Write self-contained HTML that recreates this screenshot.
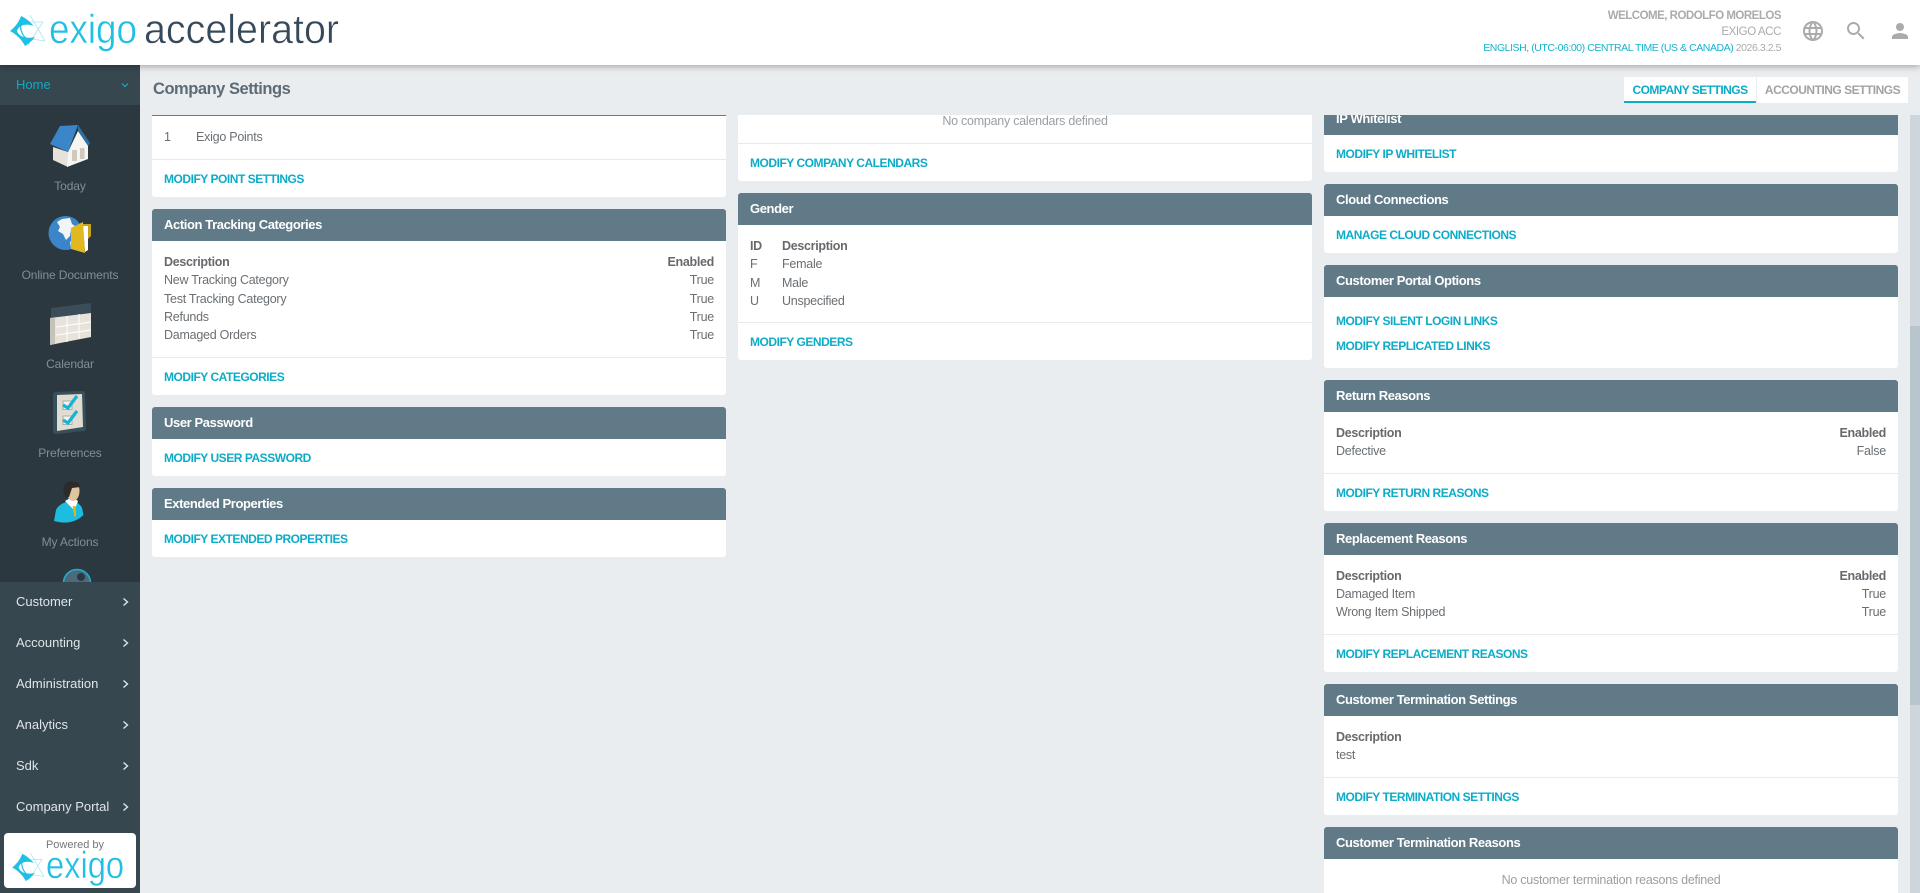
<!DOCTYPE html>
<html lang="en"><head><meta charset="utf-8"><title>Company Settings</title>
<style>
*{box-sizing:border-box}
html,body{margin:0;padding:0;width:1920px;height:893px;overflow:hidden;background:#eaedf0;font-family:"Liberation Sans",sans-serif}
a{text-decoration:none;color:inherit}
#hdr{position:absolute;left:0;top:0;width:1920px;height:65px;background:#fff;box-shadow:0 2px 6px rgba(0,0,0,.28);z-index:5}
.hr{position:absolute;right:139px;text-align:right;white-space:nowrap;line-height:16px;color:#ababab}
#side{position:absolute;left:0;top:65px;width:140px;height:828px;background:#2c3840;overflow:hidden;z-index:4}
#home{position:absolute;left:0;top:0;width:140px;height:40px;background:#37474f;color:#12a9c4;font-size:13px;line-height:40px;padding-left:16px}
.lbl{position:absolute;left:0;width:140px;text-align:center;font-size:12px;line-height:16px;color:#858d92;letter-spacing:-.12px}
#nav{position:absolute;left:0;top:517px;width:140px;height:311px;background:#37474f}
.ni{position:absolute;left:16px;font-size:13px;line-height:18px;color:#dfe5e8}
.ch{position:absolute;left:120px}
#pw{position:absolute;left:4px;top:251px;width:132px;height:55px;background:#fff;border-radius:4px}
#ttl{position:absolute;left:153px;top:79px;font-size:16.5px;line-height:20px;font-weight:bold;color:#5c6b75;letter-spacing:-.47px}
.tab{position:absolute;top:77px;height:26px;background:#fff;font-size:12px;font-weight:bold;line-height:26px;text-align:center;white-space:nowrap}
#clip{position:absolute;left:0;top:115px;width:1920px;height:778px;overflow:hidden}
#in{position:absolute;left:0;top:-115px;width:1920px;height:893px}
.col{position:absolute;top:0;width:574px;height:893px}
.p{position:absolute;left:0;width:574px;background:#fff;border-radius:3px}
.h{position:absolute;left:0;top:0;width:574px;height:32px;background:#607a88;border-radius:3px 3px 0 0}
.h b{position:absolute;left:12px;top:7px;font-size:13px;line-height:18px;color:#fff;letter-spacing:-.4px;white-space:nowrap}
.d{position:absolute;left:0;width:574px;height:1px;background:#e8ebed}
.t{position:absolute;left:12px;font-size:12.5px;line-height:18px;margin-top:-9px;color:#6a6f73;letter-spacing:-.25px;white-space:nowrap}
.t.c2{left:44px}
.t.r{left:auto;right:12px}
.t.b{font-weight:bold;color:#66696d;letter-spacing:-.3px}
.l{position:absolute;left:12px;font-size:12px;font-weight:bold;line-height:18px;margin-top:-9px;color:#0cacc8;letter-spacing:-.47px;white-space:nowrap}
.m{position:absolute;left:0;width:574px;text-align:center;font-size:12.5px;line-height:18px;margin-top:-9px;color:#9b9fa2;letter-spacing:-.25px}
#sb{position:absolute;left:1910px;top:115px;width:10px;height:778px;background:#ced6dc}
#th{position:absolute;left:0;top:211px;width:10px;height:379px;background:#b9c5cd}
svg{display:block}
</style></head><body>

<svg width="0" height="0" style="position:absolute">
<symbol id="star" viewBox="0 0 36 32">
<g fill="none" stroke="#a9e6f3" stroke-width=".8"><path d="M20 0L35 26M33 7L18 30M13 7H33M15 23L35 26"/></g>
<path fill="#1fc0e4" d="M0 16C5 12 9 7 11 1C16 3 20 7 24 11C16 8 9 10 7 16C9 22 17 24 25 22C22 26 18 29 15 31C12 25 6 19 0 16Z"/>
<path fill="none" stroke="#1fc0e4" stroke-width="1.3" d="M12 6C9 12 11 20 18 25"/>
</symbol>
</svg>

<div id="hdr">
<svg style="position:absolute;left:10px;top:15px" width="36" height="32"><use href="#star"/></svg>
<svg style="position:absolute;left:0;top:0" width="345" height="65">
<text x="49" y="43" font-family="Liberation Sans" font-size="41" fill="#1fc0e4" stroke="#fff" stroke-width=".5" textLength="88" lengthAdjust="spacingAndGlyphs">exigo</text>
<text x="144" y="43" font-family="Liberation Sans" font-size="41" fill="#36495a" stroke="#fff" stroke-width=".5" textLength="195" lengthAdjust="spacingAndGlyphs">accelerator</text>
</svg>
<div class="hr" style="top:8px;font-size:11.5px;font-weight:bold;letter-spacing:-.5px">WELCOME, RODOLFO MORELOS</div>
<div class="hr" style="top:24px;font-size:11.5px;letter-spacing:-.4px">EXIGO ACC</div>
<div class="hr" style="top:40px;font-size:10.5px;letter-spacing:-.44px"><span style="color:#16b3cf">ENGLISH, (UTC-06:00) CENTRAL TIME (US &amp; CANADA)</span> 2026.3.2.5</div>
<svg style="position:absolute;left:1801px;top:19px" width="24" height="24" fill="#ababab"><path d="M11.99 2C6.47 2 2 6.48 2 12s4.47 10 9.99 10C17.52 22 22 17.52 22 12S17.52 2 11.99 2zm6.93 6h-2.95c-.32-1.25-.78-2.45-1.38-3.56 1.84.63 3.37 1.91 4.33 3.56zM12 4.04c.83 1.2 1.48 2.53 1.91 3.96h-3.82c.43-1.43 1.08-2.76 1.91-3.96zM4.26 14C4.1 13.36 4 12.69 4 12s.1-1.36.26-2h3.38c-.08.66-.14 1.32-.14 2 0 .68.06 1.34.14 2H4.26zm.82 2h2.95c.32 1.25.78 2.45 1.38 3.56-1.84-.63-3.37-1.9-4.33-3.56zm2.95-8H5.08c.96-1.66 2.49-2.93 4.33-3.56C8.81 5.55 8.35 6.75 8.03 8zM12 19.96c-.83-1.2-1.48-2.53-1.91-3.96h3.82c-.43 1.43-1.08 2.76-1.91 3.96zM14.34 14H9.66c-.09-.66-.16-1.32-.16-2 0-.68.07-1.35.16-2h4.68c.09.65.16 1.32.16 2 0 .68-.07 1.34-.16 2zm.25 5.56c.6-1.11 1.06-2.31 1.38-3.56h2.95c-.96 1.65-2.49 2.93-4.33 3.56zM16.36 14c.08-.66.14-1.32.14-2 0-.68-.06-1.34-.14-2h3.38c.16.64.26 1.31.26 2s-.1 1.36-.26 2h-3.38z"/></svg>
<svg style="position:absolute;left:1844px;top:19px" width="24" height="24" fill="#ababab"><path d="M15.5 14h-.79l-.28-.27C15.41 12.59 16 11.11 16 9.5 16 5.91 13.09 3 9.5 3S3 5.91 3 9.5 5.91 16 9.5 16c1.61 0 3.09-.59 4.23-1.57l.27.28v.79l5 4.99L20.49 19l-4.99-5zm-6 0C7.01 14 5 11.99 5 9.5S7.01 5 9.5 5 14 7.01 14 9.5 11.99 14 9.5 14z"/></svg>
<svg style="position:absolute;left:1888px;top:19px" width="24" height="24" fill="#ababab"><path d="M12 12c2.21 0 4-1.79 4-4s-1.79-4-4-4-4 1.79-4 4 1.79 4 4 4zm0 2c-2.67 0-8 1.34-8 4v2h16v-2c0-2.66-5.33-4-8-4z"/></svg>
</div>

<div id="side">
<div id="home">Home</div>
<svg class="ch" style="left:119px;top:17px" width="12" height="8"><path d="M3 1.5L6 4.5L9 1.5" fill="none" stroke="#12a9c4" stroke-width="1.2"/></svg>

<svg style="position:absolute;left:0;top:-65px" width="140" height="600">
<!-- house -->
<path fill="#e6e2da" d="M53 147L68 152V167L53 160Z"/>
<path fill="#f5f5f4" d="M68 152L78 131L88 145V159L67 167Z"/>
<path fill="#cfcabd" d="M72 150h5v11h-5zM80 148h4.500v11h-4.500z"/>
<path fill="#3a86c8" d="M60 126L78 125L68 152L50 144Z"/>
<path fill="#2f6f9f" d="M78 125L90 143L88 146L78 131Z"/>
<!-- globe + folder -->
<circle cx="65.500" cy="233" r="17" fill="#3a86c8"/>
<path fill="#f2f5f7" d="M57 222L62 219L70 218L72 224L75 226L71 230L70 236L66 240L63 234L58 231L60 227ZM70 242L72 240L75 247L71 248Z"/>
<path fill="#c8a21f" d="M83 224H91V236L87 240H83Z"/>
<path fill="#fff" d="M83 226H88V250L85 252Z"/>
<path fill="#e2b820" d="M71 228L83 222L85 253L71 249Z"/>
<!-- calendar -->
<path fill="#3a4d58" d="M51 308L91 303V314L51 319Z"/>
<path fill="#e7e3da" d="M50 318L91 313V337L50 345Z"/>
<path fill="#c5c2b9" d="M50 318H55V344L50 345Z"/>
<path fill="none" stroke="#fff" stroke-width="1" d="M56 327L91 322M56 335L91 330M67 316V342M79 314V339"/>
<!-- preferences -->
<path fill="#39505c" d="M56 392L82 391Q85 391 85 394L86 429Q86 431 83 431L57 434Q53 434 53 431L53 395Q53 392 56 392Z"/>
<path fill="#e0dcd2" d="M57 395L82 394L83 427L57 431Z"/>
<path fill="#f4f2ec" stroke="#9b9c98" stroke-width=".8" d="M63 401h9v8.500h-9zM63 416h9v8.500h-9z"/>
<path fill="none" stroke="#18b3d3" stroke-width="3.200" d="M63 405L68 408L77 396M63 420L68 423L77 411"/>
<!-- person -->
<path fill="#1cbde0" d="M56 510Q58 505 66 502L76 502Q81 505 82 508L83.500 515Q72 526 54 521Z"/>
<path fill="#fff" d="M65 501L72 497L78 501L75 509L73 509Z"/>
<path fill="#e0b820" d="M72.500 506H75.500L76 516L74.500 517Z"/>
<ellipse cx="73" cy="491" rx="6.500" ry="10" fill="#e0c49c"/>
<path fill="#2b2b2b" d="M64 494C62 485 66 481 72 481C77 481 80 484 80.500 487L72 488L69 497L66 498Z"/>
<!-- partial globe -->
<circle cx="77" cy="583" r="13.500" fill="#4d6a7a" stroke="#1fb0d0" stroke-width="1.500"/>
<circle cx="81" cy="577" r="4" fill="#2c3840"/>
</svg>

<div class="lbl" style="top:113px">Today</div>
<div class="lbl" style="top:202px">Online Documents</div>
<div class="lbl" style="top:291px">Calendar</div>
<div class="lbl" style="top:380px">Preferences</div>
<div class="lbl" style="top:469px">My Actions</div>

<div id="nav">
<div class="ni" style="top:11px">Customer</div>
<div class="ni" style="top:52px">Accounting</div>
<div class="ni" style="top:93px">Administration</div>
<div class="ni" style="top:134px">Analytics</div>
<div class="ni" style="top:175px">Sdk</div>
<div class="ni" style="top:216px">Company Portal</div>
<svg class="ch" style="top:14px" width="12" height="12"><path d="M3.500 2.500L7.500 6L3.500 9.500" fill="none" stroke="#dfe5e8" stroke-width="1.400"/></svg>
<svg class="ch" style="top:55px" width="12" height="12"><path d="M3.500 2.500L7.500 6L3.500 9.500" fill="none" stroke="#dfe5e8" stroke-width="1.400"/></svg>
<svg class="ch" style="top:96px" width="12" height="12"><path d="M3.500 2.500L7.500 6L3.500 9.500" fill="none" stroke="#dfe5e8" stroke-width="1.400"/></svg>
<svg class="ch" style="top:137px" width="12" height="12"><path d="M3.500 2.500L7.500 6L3.500 9.500" fill="none" stroke="#dfe5e8" stroke-width="1.400"/></svg>
<svg class="ch" style="top:178px" width="12" height="12"><path d="M3.500 2.500L7.500 6L3.500 9.500" fill="none" stroke="#dfe5e8" stroke-width="1.400"/></svg>
<svg class="ch" style="top:219px" width="12" height="12"><path d="M3.500 2.500L7.500 6L3.500 9.500" fill="none" stroke="#dfe5e8" stroke-width="1.400"/></svg>
<div id="pw">
<div style="position:absolute;left:1px;width:140px;top:5px;text-align:center;font-size:11px;line-height:14px;color:#777">Powered by</div>
<svg style="position:absolute;left:8px;top:20px" width="33" height="29"><use href="#star"/></svg>
<svg style="position:absolute;left:0;top:0" width="132" height="55">
<text x="42" y="45" font-family="Liberation Sans" font-size="38" fill="#1fc0e4" stroke="#fff" stroke-width=".4" textLength="78" lengthAdjust="spacingAndGlyphs">exigo</text>
</svg>
</div>
</div>
</div>

<div id="ttl">Company Settings</div>
<div class="tab" style="left:1624px;width:132px;color:#0cacc8;border-bottom:2px solid #0cacc8;letter-spacing:-.53px">COMPANY SETTINGS</div>
<div class="tab" style="left:1757px;width:151px;color:#a0a3a6;letter-spacing:-.5px">ACCOUNTING SETTINGS</div>

<div id="clip"><div id="in">

<div class="col" style="left:152px">
 <div class="p" style="top:84px;height:113px">
  <div class="h"></div>
  <div class="t" style="top:53px">1</div><div class="t c2" style="top:53px">Exigo Points</div>
  <div class="d" style="top:75px"></div>
  <a class="l" style="top:95px">MODIFY POINT SETTINGS</a>
 </div>
 <div class="p" style="top:209px;height:186px">
  <div class="h"><b>Action Tracking Categories</b></div>
  <div class="t b" style="top:53px">Description</div><div class="t b r" style="top:53px">Enabled</div>
  <div class="t" style="top:71px">New Tracking Category</div><div class="t r" style="top:71px">True</div>
  <div class="t" style="top:90px">Test Tracking Category</div><div class="t r" style="top:90px">True</div>
  <div class="t" style="top:108px">Refunds</div><div class="t r" style="top:108px">True</div>
  <div class="t" style="top:126px">Damaged Orders</div><div class="t r" style="top:126px">True</div>
  <div class="d" style="top:148px"></div>
  <a class="l" style="top:168px">MODIFY CATEGORIES</a>
 </div>
 <div class="p" style="top:407px;height:69px">
  <div class="h"><b>User Password</b></div>
  <a class="l" style="top:51px">MODIFY USER PASSWORD</a>
 </div>
 <div class="p" style="top:488px;height:69px">
  <div class="h"><b>Extended Properties</b></div>
  <a class="l" style="top:51px">MODIFY EXTENDED PROPERTIES</a>
 </div>
</div>

<div class="col" style="left:738px">
 <div class="p" style="top:100px;height:81px">
  <div class="m" style="top:21px">No company calendars defined</div>
  <div class="d" style="top:43px"></div>
  <a class="l" style="top:63px">MODIFY COMPANY CALENDARS</a>
 </div>
 <div class="p" style="top:193px;height:167px">
  <div class="h"><b>Gender</b></div>
  <div class="t b" style="top:53px">ID</div><div class="t b c2" style="top:53px">Description</div>
  <div class="t" style="top:71px">F</div><div class="t c2" style="top:71px">Female</div>
  <div class="t" style="top:90px">M</div><div class="t c2" style="top:90px">Male</div>
  <div class="t" style="top:108px">U</div><div class="t c2" style="top:108px">Unspecified</div>
  <div class="d" style="top:129px"></div>
  <a class="l" style="top:149px">MODIFY GENDERS</a>
 </div>
</div>

<div class="col" style="left:1324px">
 <div class="p" style="top:103px;height:69px">
  <div class="h"><b>IP Whitelist</b></div>
  <a class="l" style="top:51px">MODIFY IP WHITELIST</a>
 </div>
 <div class="p" style="top:184px;height:69px">
  <div class="h"><b>Cloud Connections</b></div>
  <a class="l" style="top:51px">MANAGE CLOUD CONNECTIONS</a>
 </div>
 <div class="p" style="top:265px;height:103px">
  <div class="h"><b>Customer Portal Options</b></div>
  <a class="l" style="top:56px">MODIFY SILENT LOGIN LINKS</a>
  <a class="l" style="top:81px">MODIFY REPLICATED LINKS</a>
 </div>
 <div class="p" style="top:380px;height:131px">
  <div class="h"><b>Return Reasons</b></div>
  <div class="t b" style="top:53px">Description</div><div class="t b r" style="top:53px">Enabled</div>
  <div class="t" style="top:71px">Defective</div><div class="t r" style="top:71px">False</div>
  <div class="d" style="top:93px"></div>
  <a class="l" style="top:113px">MODIFY RETURN REASONS</a>
 </div>
 <div class="p" style="top:523px;height:149px">
  <div class="h"><b>Replacement Reasons</b></div>
  <div class="t b" style="top:53px">Description</div><div class="t b r" style="top:53px">Enabled</div>
  <div class="t" style="top:71px">Damaged Item</div><div class="t r" style="top:71px">True</div>
  <div class="t" style="top:89px">Wrong Item Shipped</div><div class="t r" style="top:89px">True</div>
  <div class="d" style="top:111px"></div>
  <a class="l" style="top:131px">MODIFY REPLACEMENT REASONS</a>
 </div>
 <div class="p" style="top:684px;height:131px">
  <div class="h"><b>Customer Termination Settings</b></div>
  <div class="t b" style="top:53px">Description</div>
  <div class="t" style="top:71px">test</div>
  <div class="d" style="top:93px"></div>
  <a class="l" style="top:113px">MODIFY TERMINATION SETTINGS</a>
 </div>
 <div class="p" style="top:827px;height:90px">
  <div class="h"><b>Customer Termination Reasons</b></div>
  <div class="m" style="top:53px">No customer termination reasons defined</div>
 </div>
</div>

</div></div>

<div id="sb"><div id="th"></div></div>
</body></html>
